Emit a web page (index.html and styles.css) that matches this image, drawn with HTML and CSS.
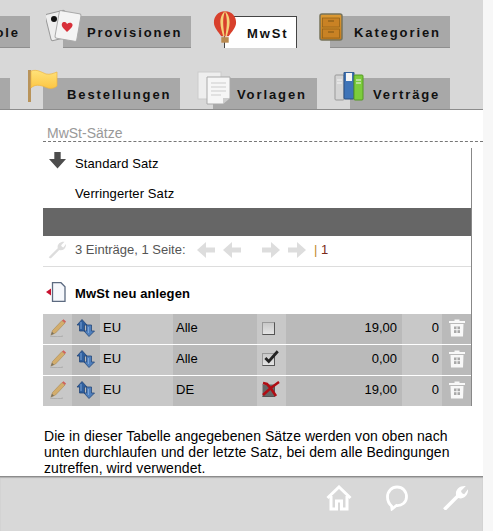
FILE: index.html
```html
<!DOCTYPE html>
<html lang="en">
<head>
  <meta charset="UTF-8">
  <title>MwSt</title>
  <link rel="stylesheet" href="styles.css">
</head>
<body>
  <svg class="sprite" width="0" height="0">
    <defs>
      <linearGradient id="drawer-fill" x1="0" y1="0" x2="0" y2="1">
        <stop offset="0" stop-color="#dc9a34"/>
        <stop offset="1" stop-color="#c47c1c"/>
      </linearGradient>
      <linearGradient id="flag-fill" x1="0" y1="0" x2="0" y2="1">
        <stop offset="0" stop-color="#ffe27a"/>
        <stop offset="1" stop-color="#fcc644"/>
      </linearGradient>
    </defs>
    <symbol id="pencil" viewBox="0 0 16 18">
      <path d="M0 17 C5 18 10 18 13 17" stroke="#aaa" stroke-width="1" fill="none"/>
      <path d="M1 16 L2.500 11.500 L12 1.500 L15 4 L5.500 14 Z" fill="#d3ad6c" stroke="#a88a56" stroke-width=".6"/>
      <path d="M12 1.500 L13.500 .3 L16 2.500 L15 4 Z" fill="#d0605a"/>
      <path d="M1 16 L2 12.800 L4 14.700 Z" fill="#77705f"/>
    </symbol>
    <symbol id="swap" viewBox="0 0 20 18">
      <path d="M1 6 L6 .5 L11 6 L8.500 6 L8.500 12 L3.500 12 L3.500 6 Z" fill="#2f5f9e" stroke="#24487a" stroke-width=".8"/>
      <path d="M8 12 L10.500 12 L10.500 6 L15.500 6 L15.500 12 L18.500 12 L13 17.500 Z" fill="#4f7fbc" stroke="#24487a" stroke-width=".8"/>
      <path d="M5 3 L5 10 M12.500 8 L12.500 14" stroke="#7ba3d6" stroke-width="1"/>
    </symbol>
    <symbol id="trash" viewBox="0 0 16 18">
      <path d="M5.500 .5 H10.500 V2 H16 V4 H0 V2 H5.500 Z M1.500 5 H14.500 L14 17.500 H2 Z" fill="#f8f8f8"/>
      <path d="M5 7.500 H11 V14 H5 Z" fill="#a9a9a9"/>
      <path d="M8 7.500 V14 M5 10.700 H11" stroke="#f8f8f8" stroke-width="1"/>
    </symbol>
    <symbol id="arrow-left" viewBox="0 0 18 16">
      <path d="M9 0 L0 8 L9 16 L9 10.500 L18 10.500 L18 5.500 L9 5.500 Z" fill="#ddd"/>
    </symbol>
    <symbol id="arrow-right" viewBox="0 0 18 16">
      <path d="M9 0 L18 8 L9 16 L9 10.500 L0 10.500 L0 5.500 L9 5.500 Z" fill="#ddd"/>
    </symbol>
    <symbol id="wrench" viewBox="0 0 24 24">
      <path d="M2.500 23 L1 21.500 L13 9.500 C12 5 15.500 .5 22 1 L17.500 5.500 L18.500 7.500 L20.500 8.500 L24 4 C24.500 10 19.500 13.500 15 12 L4 23 Z"/>
    </symbol>
  </svg>

  <div class="page">
    <header class="header">
      <nav class="tab-row">
        <a class="tab tab-cut-first">Symbole</a>
        <a class="tab tab-provisionen">
          <svg class="tab-icon icon-cards" viewBox="0 0 36 36">
            <rect x="2" y="4" width="20" height="27" rx="2" transform="rotate(-14 12 18)" fill="#eee" stroke="#999"/>
            <circle cx="8" cy="11" r="3" fill="#111"/>
            <rect x="11" y="4" width="22" height="28" rx="2" transform="rotate(10 22 18)" fill="#f4f4f4" stroke="#aaa"/>
            <path d="M21 24 C17 20 15 18 16 15.500 C17 13.500 20 13.500 21 16 C23 14 26 14.500 26.500 16.500 C27 19 24 21 21 24 Z" fill="#d8303a"/>
          </svg>
          Provisionen
        </a>
        <a class="tab tab-active tab-mwst">
          <svg class="tab-icon icon-balloon" viewBox="0 0 26 36">
            <path d="M13 1 C5 1 1 7 1 13 C1 19 6 23 9 28 H17 C20 23 25 19 25 13 C25 7 21 1 13 1 Z" fill="#d8402c"/>
            <path d="M13 1 C9 4 8 9 8 13 C8 18 10 24 11 28 H15 C16 24 18 18 18 13 C18 9 17 4 13 1 Z" fill="#f4d27a"/>
            <path d="M13 1 C11.500 5 11 9 11 13 C11 18 12 24 12.500 28 H13.500 C14 24 15 18 15 13 C15 9 14.500 5 13 1 Z" fill="#d8402c"/>
            <rect x="9" y="29" width="8" height="6" fill="#b98a50"/>
          </svg>
          MwSt
        </a>
        <a class="tab tab-kategorien">
          <svg class="tab-icon icon-drawer" viewBox="0 0 24 28">
            <rect x="1" y="1" width="22" height="26" rx="2" fill="url(#drawer-fill)" stroke="#77735a" stroke-width="1.500"/>
            <rect x="3.500" y="5" width="17" height="9" fill="#c98224" stroke="#8c5e18" stroke-width=".7"/>
            <rect x="3.500" y="16" width="17" height="9" fill="#c98224" stroke="#8c5e18" stroke-width=".7"/>
            <path d="M9 8 H15 M9 19 H15" stroke="#7c5414" stroke-width="1.200"/>
          </svg>
          Kategorien
        </a>
      </nav>
      <nav class="tab-row tab-row-low">
        <a class="tab tab-cut-second"></a>
        <a class="tab tab-bestellungen">
          <svg class="tab-icon icon-flag" viewBox="0 0 32 34">
            <rect x="1" y="1" width="3" height="32" fill="#b8935a"/>
            <path d="M4 2 C10 0 14 3 19 5 C23 6 27 4 30 3 L30 17 C27 20 22 20 18 18 C13 16 8 15 4 19 Z" fill="url(#flag-fill)" stroke="#eeb540" stroke-width=".7"/>
          </svg>
          Bestellungen
        </a>
        <a class="tab tab-vorlagen">
          <svg class="tab-icon icon-docs" viewBox="0 0 34 34">
            <rect x="1" y="1" width="23" height="27" fill="#eee" stroke="#ccc"/>
            <path d="M10 6 H33 V27 L26 33 H10 Z" fill="#f6f6f6" stroke="#aaa"/>
            <path d="M14 12 H29 M14 16 H29 M14 20 H29 M14 24 H24" stroke="#ccc"/>
            <path d="M26 33 V27 H33 Z" fill="#ccc"/>
          </svg>
          Vorlagen
        </a>
        <a class="tab tab-vertraege">
          <svg class="tab-icon icon-binders" viewBox="0 0 30 30">
            <rect x="1" y="3" width="9" height="25" rx="1" fill="#d4d4d4" stroke="#999"/>
            <rect x="10" y="0" width="10" height="27" rx="1" fill="#3f74b8" stroke="#2a4f80"/>
            <rect x="12" y="1" width="6" height="8" fill="#f4f4f4"/>
            <rect x="20" y="3" width="9" height="25" rx="1" fill="#7ccc3c" stroke="#559a22"/>
            <path d="M3 8 H8 M3 11 H8 M22 8 H27 M22 11 H27" stroke="#f4f4f4"/>
          </svg>
          Verträge
        </a>
      </nav>
    </header>

    <main class="content">
      <h2 class="section-title">MwSt-Sätze</h2>
      <div class="panel">
        <div class="rate-row">
          <svg class="arrow-down" viewBox="0 0 16 16"><path d="M5 0 H11 V6.500 H16 L8 15.500 L0 6.500 H5 Z" fill="#4d4d4d"/></svg>
          <span>Standard Satz</span>
        </div>
        <div class="rate-row"><span>Verringerter Satz</span></div>
        <div class="dark-bar"></div>
        <div class="pager">
          <svg class="pager-wrench" fill="#ddd"><use href="#wrench"/></svg>
          <span class="pager-text">3 Einträge, 1 Seite:</span>
          <svg class="pager-arrow"><use href="#arrow-left"/></svg>
          <svg class="pager-arrow"><use href="#arrow-left"/></svg>
          <span class="pager-space"></span>
          <svg class="pager-arrow"><use href="#arrow-right"/></svg>
          <svg class="pager-arrow"><use href="#arrow-right"/></svg>
          <span class="pager-page"><span class="pager-sep">|</span> 1</span>
        </div>
        <div class="new-row">
          <svg class="new-icon" viewBox="0 0 20 20">
            <path d="M0 10 L5 6.500 V13.500 Z" fill="#c8102e"/>
            <path d="M6.500 .7 H15 L19 4.700 V19.300 H6.500 Z" fill="#f6f8fc" stroke="#5c6a80" stroke-width="1.300"/>
          </svg>
          <span>MwSt neu anlegen</span>
        </div>
        <table class="rates">
          <tr>
            <td class="c-edit"><svg class="cell-icon"><use href="#pencil"/></svg></td>
            <td class="c-move"><svg class="cell-icon move"><use href="#swap"/></svg></td>
            <td class="c-region">EU</td>
            <td class="c-land">Alle</td>
            <td class="c-check"><span class="box"></span></td>
            <td class="c-rate">19,00</td>
            <td class="c-num">0</td>
            <td class="c-del"><svg class="cell-icon"><use href="#trash"/></svg></td>
          </tr>
          <tr>
            <td class="c-edit"><svg class="cell-icon"><use href="#pencil"/></svg></td>
            <td class="c-move"><svg class="cell-icon move"><use href="#swap"/></svg></td>
            <td class="c-region">EU</td>
            <td class="c-land">Alle</td>
            <td class="c-check">
              <span class="box"><svg class="tick" viewBox="0 0 16 14"><path d="M3 7 L6 10 L14 1" stroke="#222" stroke-width="2.500" fill="none"/></svg></span>
            </td>
            <td class="c-rate">0,00</td>
            <td class="c-num">0</td>
            <td class="c-del"><svg class="cell-icon"><use href="#trash"/></svg></td>
          </tr>
          <tr>
            <td class="c-edit"><svg class="cell-icon"><use href="#pencil"/></svg></td>
            <td class="c-move"><svg class="cell-icon move"><use href="#swap"/></svg></td>
            <td class="c-region">EU</td>
            <td class="c-land">DE</td>
            <td class="c-check">
              <span class="box box-dark"><svg class="tick" viewBox="0 0 18 16"><path d="M1 2 L5 3 C8 6 11 10 14 15 M1 14 C5 10 11 5 17 1" stroke="#b00d14" stroke-width="2.500" fill="none"/></svg></span>
            </td>
            <td class="c-rate">19,00</td>
            <td class="c-num">0</td>
            <td class="c-del"><svg class="cell-icon"><use href="#trash"/></svg></td>
          </tr>
        </table>
      </div>
      <p class="note">Die in dieser Tabelle angegebenen Sätze werden von oben nach unten durchlaufen und der letzte Satz, bei dem alle Bedingungen zutreffen, wird verwendet.</p>
    </main>

    <footer class="footer">
      <svg class="foot-icon foot-home" viewBox="0 0 26 26" fill="none" stroke="#fff" stroke-width="3">
        <path d="M1.500 13 L13 2 L24.500 13"/>
        <path d="M5 11 V24 H10.500 V16 H15.500 V24 H21 V11"/>
      </svg>
      <svg class="foot-icon foot-bubble" viewBox="0 0 22 26" fill="none" stroke="#fff" stroke-width="2.800">
        <path d="M5.500 21 C2 18 1.500 15 1.500 12 C1.500 6 6 2 11 2 C16.500 2 20.500 6 20.500 12 C20.500 17.500 15.500 21 10.500 20.500 L6 24 Z"/>
      </svg>
      <svg class="foot-icon" fill="#fff"><use href="#wrench"/></svg>
    </footer>
  </div>
</body>
</html>
```

FILE: styles.css
```css
body {
  margin: 0;
  background: #f7f7f7;
  font-family: "Liberation Sans", Arial, sans-serif;
  font-size: 14px;
  color: #000;
}

.sprite {
  position: absolute;
}

.page {
  width: 483px;
  height: 531px;
  display: flex;
  flex-direction: column;
  overflow: hidden;
  background: #d8d8d8;
}

/* tabs */
.header {
  height: 110px;
  flex: none;
  padding-top: 16px;
  box-sizing: border-box;
  border-bottom: 1px solid #8c8c8c;
  overflow: hidden;
}

.tab-row {
  height: 32px;
  display: flex;
  justify-content: flex-end;
  gap: 33px;
  padding-right: 33px;
}

.tab-row-low {
  margin-top: 30px;
}

.tab {
  position: relative;
  flex: none;
  box-sizing: border-box;
  height: 32px;
  line-height: 33px;
  background: #a8a8a8;
  border-bottom: 1px solid #8f8f8f;
  font-size: 13px;
  font-weight: bold;
  letter-spacing: 1.9px;
  white-space: nowrap;
  color: #111;
}

.tab-active {
  background: #fff;
  border: 1px solid #444;
  border-bottom: none;
}

.tab-cut-first { width: 80px; text-align: right; padding-right: 10px; }
.tab-cut-second { width: 60px; }
.tab-provisionen { width: 128px; padding-left: 24px; }
.tab-mwst { width: 73px; padding-left: 22px; }
.tab-kategorien { width: 120px; padding-left: 24px; }
.tab-bestellungen { width: 137px; padding-left: 24px; }
.tab-vorlagen { width: 104px; padding-left: 24px; }
.tab-vertraege { width: 100px; padding-left: 23px; }

.tab-icon {
  position: absolute;
}

.icon-cards { left: -17px; top: -8px; width: 36px; height: 36px; }
.icon-balloon { left: -12px; top: -8px; width: 24px; height: 36px; }
.icon-drawer { left: -11px; top: -3px; width: 24px; height: 28px; }
.icon-flag { left: -16px; top: -9px; width: 32px; height: 34px; }
.icon-docs { left: -16px; top: -7px; width: 34px; height: 34px; }
.icon-binders { left: -16px; top: -6px; width: 30px; height: 30px; }

/* main area */
.content {
  flex: 1;
  min-height: 0;
  background: #fff;
  overflow: hidden;
}

.section-title {
  margin: 15px 0 0 43px;
  padding: 0 0 0 4px;
  height: 16px;
  line-height: 16px;
  font-size: 14px;
  font-weight: normal;
  color: #999;
  border-bottom: 1px dashed #777;
}

.panel {
  width: 428px;
  margin: 6px 0 0 43px;
  border-right: 1px solid #888;
}

.rate-row {
  height: 30px;
  display: flex;
  align-items: center;
  padding-left: 32px;
  position: relative;
  font-size: 13px;
  letter-spacing: 0.1px;
}

.arrow-down {
  position: absolute;
  left: 6px;
  top: 4px;
  width: 17px;
  height: 17px;
}

.dark-bar {
  height: 28px;
  background: #666;
}

.pager {
  height: 31px;
  box-sizing: border-box;
  padding-bottom: 3px;
  display: flex;
  align-items: center;
  border-bottom: 1px solid #ddd;
  color: #555;
  font-size: 13px;
}

.pager-wrench { width: 18px; height: 18px; margin-left: 5px; margin-right: 9px; }
.pager-text { width: 122px; }
.pager-arrow { width: 18px; height: 16px; margin-right: 8px; }
.pager-space { width: 13px; }
.pager-page { color: #7a2a1a; }
.pager-sep { color: #c28a2a; }

.new-row {
  height: 47px;
  box-sizing: border-box;
  padding: 6px 0 0 32px;
  display: flex;
  align-items: center;
  position: relative;
  font-weight: bold;
  font-size: 13px;
  letter-spacing: 0.1px;
}

.new-icon {
  position: absolute;
  left: 3px;
  top: 15px;
  width: 20px;
  height: 20px;
}

.rates {
  width: 428px;
  height: 91px;
  border-collapse: collapse;
  table-layout: fixed;
  font-size: 13px;
}

.rates td {
  padding: 0 0 3px;
  height: 27px;
  border-bottom: 1px solid #fff;
  white-space: nowrap;
}

.rates tr:last-child td {
  border-bottom: none;
}

.rates .c-edit { width: 29px; background: #c8c8c8; }
.rates .c-move { width: 28px; background: #bababa; }
.rates .c-region { width: 70px; padding-left: 3px; background: #c8c8c8; }
.rates .c-land { width: 81px; padding-left: 3px; background: #bababa; }
.rates .c-check { width: 24px; padding-left: 5px; background: #c8c8c8; }
.rates .c-rate { width: 111px; padding-right: 5px; background: #bababa; text-align: right; }
.rates .c-num { width: 37px; padding-right: 3px; background: #c8c8c8; text-align: right; }
.rates .c-del { background: #bababa; }

.cell-icon {
  display: block;
  width: 16px;
  height: 18px;
  margin: 0 auto;
}

.cell-icon.move {
  width: 20px;
}

.box {
  display: inline-block;
  position: relative;
  width: 11px;
  height: 11px;
  vertical-align: middle;
  background: linear-gradient(#c8c8c8, #e4e4e4);
  border: 1px solid #555;
  border-top-color: #999;
  border-left-color: #999;
}

.box-dark {
  background: #666;
}

.tick {
  position: absolute;
  left: -1px;
  top: -4px;
  width: 18px;
  height: 16px;
}

.note {
  margin: 22px 0 0 44px;
  width: 420px;
  line-height: 16px;
  letter-spacing: 0.05px;
}

/* footer */
.footer {
  flex: none;
  height: 55px;
  box-sizing: border-box;
  border-top: 1px solid #8c8c8c;
  box-shadow: inset 0 1px 1px #b0b0b0;
  display: flex;
  justify-content: flex-end;
  gap: 34px;
  padding: 8px 15px 0 0;
}

.foot-icon {
  width: 26px;
  height: 26px;
}

.foot-bubble {
  width: 22px;
}
```
